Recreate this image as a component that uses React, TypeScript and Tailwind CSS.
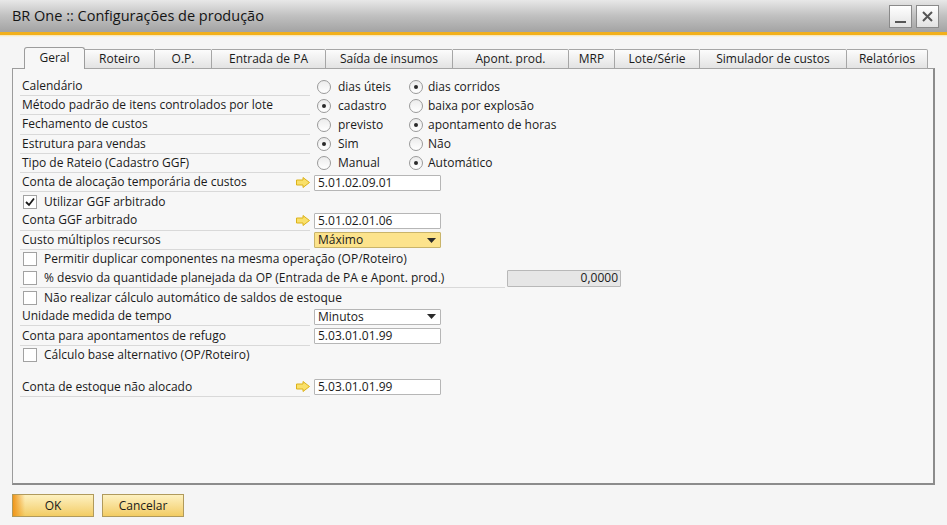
import React from "react";

function Arrow() {
  return (
    <svg width="14" height="11" viewBox="0 0 14 11" className="shrink-0">
      <polygon points="0.5,3 7,3 7,0.5 13.5,5.5 7,10.5 7,8 0.5,8" fill="#f9e06a" stroke="#dcb21a" strokeWidth="1" />
    </svg>
  );
}

function Radio({ checked }: { checked?: boolean }) {
  return (
    <span className="w-[14px] h-[14px] rounded-full border border-[#9a9a9a] bg-gradient-to-b from-[#ececec] to-white flex items-center justify-center shrink-0">
      {checked && <span className="w-[4px] h-[4px] rounded-full bg-[#2a2a2a]" />}
    </span>
  );
}

function Checkbox({ checked }: { checked?: boolean }) {
  return (
    <span className="w-[14px] h-[14px] border border-[#a2a2a2] bg-white flex items-center justify-center shrink-0">
      {checked && (
        <svg width="10" height="10" viewBox="0 0 10 10">
          <polyline points="1,5 4,8 9,1.5" fill="none" stroke="#1a1a1a" strokeWidth="1.8" />
        </svg>
      )}
    </span>
  );
}

function TextBox({ value }: { value: string }) {
  return (
    <div className="w-[127px] h-[16px] bg-white border border-[#b6b6b6] rounded-[1px] pl-[3px] flex items-center leading-none">
      {value}
    </div>
  );
}

function Triangle() {
  return (
    <svg width="9" height="5" viewBox="0 0 9 5" className="shrink-0">
      <polygon points="0,0 9,0 4.5,5" fill="#2a2a2a" />
    </svg>
  );
}

function LabelRow({ label, arrow, children }: { label: string; arrow?: boolean; children?: React.ReactNode }) {
  return (
    <div className="h-[19.2px] flex items-center">
      <div className="w-[290px] h-full flex items-center justify-between pl-[2px] border-b border-[#d9d9d9]">
        <span>{label}</span>
        {arrow && <Arrow />}
      </div>
      <div className="ml-[4px] flex items-center">{children}</div>
    </div>
  );
}

function RadioPair({ a, b, sel }: { a: string; b: string; sel: 0 | 1 }) {
  return (
    <div className="flex items-center pl-[3px]">
      <div className="w-[92px] flex items-center gap-[7px]">
        <Radio checked={sel === 0} />
        <span>{a}</span>
      </div>
      <div className="flex items-center gap-[5px]">
        <Radio checked={sel === 1} />
        <span>{b}</span>
      </div>
    </div>
  );
}

function CheckRow({ label, checked }: { label: string; checked?: boolean }) {
  return (
    <div className="h-[19.2px] flex items-center pl-[3px] gap-[7px]">
      <Checkbox checked={checked} />
      <span>{label}</span>
    </div>
  );
}

const tabs = [
  { label: "Geral", w: "w-[61px]", active: true },
  { label: "Roteiro", w: "w-[70px]" },
  { label: "O.P.", w: "w-[57px]" },
  { label: "Entrada de PA", w: "w-[114px]" },
  { label: "Saída de insumos", w: "w-[127px]" },
  { label: "Apont. prod.", w: "w-[116px]" },
  { label: "MRP", w: "w-[46px]" },
  { label: "Lote/Série", w: "w-[85px]" },
  { label: "Simulador de custos", w: "w-[147px]" },
  { label: "Relatórios", w: "w-[81px]" },
];

export default function App() {
  return (
    <div className="w-[947px] h-[525px] bg-[#f5f5f5] flex flex-col overflow-hidden font-['Open_Sans',sans-serif] text-[12px] text-[#1a1a1a]">
      {/* title bar */}
      <div className="h-[32px] shrink-0 bg-gradient-to-b from-[#e8e8e8] via-[#c0c0c0] to-[#a3a3a3] flex items-center justify-between pl-[12px] pr-[8px]">
        <span className="text-[14.5px] text-[#141414]">BR One :: Configurações de produção</span>
        <div className="flex gap-[4px]">
          <div className="w-[23px] h-[23px] border border-[#8a8a8a] bg-gradient-to-b from-white to-[#e2e2e2] flex items-end justify-center pb-[4px]">
            <span className="w-[11px] h-[2px] bg-[#555]" />
          </div>
          <div className="w-[23px] h-[23px] border border-[#8a8a8a] bg-gradient-to-b from-white to-[#e2e2e2] flex items-center justify-center">
            <svg width="11" height="11" viewBox="0 0 11 11">
              <path d="M1 1 L10 10 M10 1 L1 10" stroke="#555" strokeWidth="2" />
            </svg>
          </div>
        </div>
      </div>
      <div className="h-[3px] shrink-0 bg-[#f2b01c]" />
      <div className="h-[2px] shrink-0 bg-gradient-to-b from-[#f9e3a8] to-[#f5f5f5]" />

      <div className="px-[12px] pt-[10px] flex flex-col">
        {/* tabs */}
        <div className="flex items-end pl-[12px] h-[22px] -mb-px relative z-10">
          {tabs.map((t) =>
            t.active ? (
              <div
                key={t.label}
                className={`${t.w} h-[22px] border border-b-0 border-[#9c9c9c] rounded-t-[3px] bg-[#f7f7f7] flex items-center justify-center pb-[1px]`}
              >
                {t.label}
              </div>
            ) : (
              <div
                key={t.label}
                className={`${t.w} h-[20px] border border-l-0 border-[#a6a6a6] rounded-tr-[2px] bg-gradient-to-b from-[#fcfcfc] to-[#e3e3e3] flex items-center justify-center`}
              >
                {t.label}
              </div>
            )
          )}
        </div>

        {/* panel */}
        <div className="h-[417px] border border-[#9c9c9c] border-r-2 border-r-[#8c8c8c] border-b-2 border-b-[#8c8c8c] bg-[#f7f7f7] pl-[7px] pt-[8px] flex flex-col">
          <LabelRow label="Calendário">
            <RadioPair a="dias úteis" b="dias corridos" sel={1} />
          </LabelRow>
          <LabelRow label="Método padrão de itens controlados por lote">
            <RadioPair a="cadastro" b="baixa por explosão" sel={0} />
          </LabelRow>
          <LabelRow label="Fechamento de custos">
            <RadioPair a="previsto" b="apontamento de horas" sel={1} />
          </LabelRow>
          <LabelRow label="Estrutura para vendas">
            <RadioPair a="Sim" b="Não" sel={0} />
          </LabelRow>
          <LabelRow label="Tipo de Rateio (Cadastro GGF)">
            <RadioPair a="Manual" b="Automático" sel={1} />
          </LabelRow>
          <LabelRow label="Conta de alocação temporária de custos" arrow>
            <TextBox value="5.01.02.09.01" />
          </LabelRow>
          <CheckRow label="Utilizar GGF arbitrado" checked />
          <LabelRow label="Conta GGF arbitrado" arrow>
            <TextBox value="5.01.02.01.06" />
          </LabelRow>
          <LabelRow label="Custo múltiplos recursos">
            <div className="w-[127px] h-[16px] bg-[#fce38c] border border-[#c9b46a] rounded-[1px] pl-[3px] pr-[4px] flex items-center justify-between leading-none">
              <span>Máximo</span>
              <Triangle />
            </div>
          </LabelRow>
          <CheckRow label="Permitir duplicar componentes na mesma operação (OP/Roteiro)" />
          <div className="h-[19.2px] flex items-center">
            <div className="w-[485px] h-full flex items-center pl-[3px] gap-[7px] border-b border-[#d9d9d9]">
              <Checkbox />
              <span>% desvio da quantidade planejada da OP (Entrada de PA e Apont. prod.)</span>
            </div>
            <div className="ml-[2px] w-[114px] h-[17px] bg-[#e6e6e6] border border-[#b8b8b8] rounded-[1px] pr-[2px] flex items-center justify-end leading-none">
              0,0000
            </div>
          </div>
          <CheckRow label="Não realizar cálculo automático de saldos de estoque" />
          <LabelRow label="Unidade medida de tempo">
            <div className="w-[127px] h-[16px] bg-white border border-[#b6b6b6] rounded-[1px] pl-[3px] pr-[4px] flex items-center justify-between leading-none">
              <span>Minutos</span>
              <Triangle />
            </div>
          </LabelRow>
          <LabelRow label="Conta para apontamentos de refugo">
            <TextBox value="5.03.01.01.99" />
          </LabelRow>
          <CheckRow label="Cálculo base alternativo (OP/Roteiro)" />
          <div className="mt-[13px]">
            <LabelRow label="Conta de estoque não alocado" arrow>
              <TextBox value="5.03.01.01.99" />
            </LabelRow>
          </div>
        </div>

        {/* buttons */}
        <div className="flex gap-[8px] mt-[9px]">
          <button className="relative w-[82px] h-[23px] border border-[#b09a5c] bg-gradient-to-b from-[#fdf1c0] to-[#f3cc62] flex items-center justify-center overflow-hidden">
            <span className="absolute left-0 top-0 bottom-0 w-[12px] bg-gradient-to-r from-[#f0961a] to-transparent" />
            <span className="relative">OK</span>
          </button>
          <button className="w-[82px] h-[23px] border border-[#b09a5c] bg-gradient-to-b from-[#fdf1c0] to-[#f3cc62] flex items-center justify-center">
            Cancelar
          </button>
        </div>
      </div>
    </div>
  );
}
